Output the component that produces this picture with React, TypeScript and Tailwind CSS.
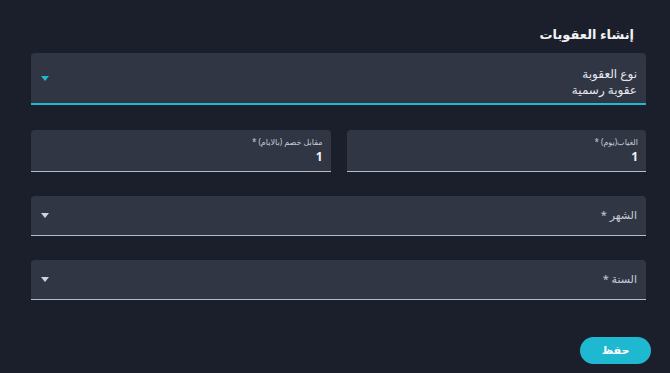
import React from 'react';

const Caret = ({ active }: { active?: boolean }) => (
  <svg width="8" height="5" viewBox="0 0 8 5" className="shrink-0">
    <path d="M0 0 L8 0 L4 5 Z" fill={active ? '#22b8d4' : '#d1d5db'} />
  </svg>
);

const SelectField = ({ label, value, active }: { label: string; value?: string; active?: boolean }) => (
  <div
    dir="ltr"
    className={`flex items-center justify-between bg-[#313644] rounded-t-[4px] pl-[10px] pr-[9px] ${
      active ? 'border-b-2 border-[#22b8d4] h-[52px]' : 'border-b border-[#b8bcc6] h-[40px]'
    }`}
  >
    <Caret active={active} />
    {value ? (
      <div dir="rtl" className="flex flex-col items-start pt-[8px] leading-[16px]">
        <span className="text-[12px] text-[#e6e8ec]">{label}</span>
        <span className="text-[12px] text-[#e6e8ec]">{value}</span>
      </div>
    ) : (
      <span dir="rtl" className="text-[11px] text-[#c9ccd3]">
        {label} *
      </span>
    )}
  </div>
);

const NumberField = ({ label, value }: { label: string; value: string }) => (
  <div className="flex-1 h-[42px] bg-[#313644] rounded-t-[4px] border-b border-[#b8bcc6] flex flex-col items-start justify-center pr-[8px]">
    <span className="text-[8px] leading-[10px] text-[#c9ccd3]">{label} *</span>
    <span className="text-[12px] leading-[16px] font-bold text-[#f1f2f4] mt-[2px]">{value}</span>
  </div>
);

export default function App() {
  return (
    <div
      dir="rtl"
      className="w-[670px] h-[373px] bg-[#1b1f2b] overflow-hidden"
      style={{ fontFamily: '"Noto Sans", "DejaVu Sans", sans-serif' }}
    >
      <div className="pr-[24px] pl-[31px] pt-[22px]">
        <h1 className="text-[13px] font-bold text-[#f1f2f4] pr-[12px] h-[24px] leading-[24px]">إنشاء العقوبات</h1>
        <div className="mt-[7px]">
          <SelectField label="نوع العقوبة" value="عقوبة رسمية" active />
        </div>
        <div className="mt-[25px] flex gap-[16px]">
          <NumberField label="الغياب(يوم)" value="1" />
          <NumberField label="مقابل خصم (بالايام)" value="1" />
        </div>
        <div className="mt-[24px]">
          <SelectField label="الشهر" />
        </div>
        <div className="mt-[24px]">
          <SelectField label="السنة" />
        </div>
        <div className="mt-[37px] flex justify-start -mr-[5px]">
          <button className="w-[71px] h-[27px] rounded-full bg-[#1fb8d1] text-white text-[11px] font-bold">
            حفظ
          </button>
        </div>
      </div>
    </div>
  );
}
